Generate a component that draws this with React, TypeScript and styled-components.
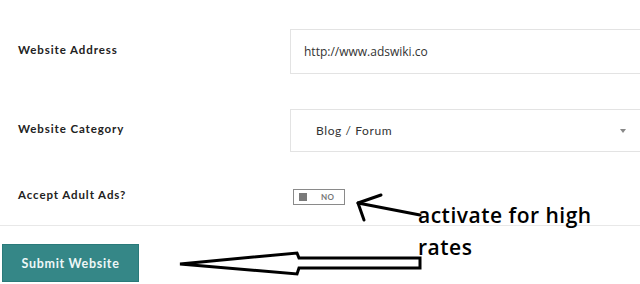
import React from 'react'
import styled, { createGlobalStyle } from 'styled-components'

const GlobalStyle = createGlobalStyle`
  html, body {
    margin: 0;
    padding: 0;
    background: #ffffff;
  }
`

const Page = styled.div`
  position: relative;
  width: 640px;
  height: 284px;
  overflow: hidden;
  background: #ffffff;
  font-family: Lato, 'Open Sans', sans-serif;
`

const Row = styled.div<{ $top: number; $height: number }>`
  display: flex;
  align-items: center;
  margin-top: ${({ $top }) => $top}px;
  height: ${({ $height }) => $height}px;
`

const Label = styled.div`
  width: 272px;
  padding: 0 0 5px 18px;
  font-family: Lato, sans-serif;
  font-weight: 700;
  font-size: 11.5px;
  letter-spacing: 0.9px;
  color: #222222;
`

const Field = styled.div`
  flex: 1;
  height: 100%;
  box-sizing: border-box;
  border: 1px solid #e3e3e3;
  border-right: none;
  display: flex;
  align-items: center;
`

const InputText = styled.span`
  padding-left: 13px;
  font-family: 'Open Sans', sans-serif;
  font-size: 12px;
  color: #333333;
`

const SelectText = styled.span`
  flex: 1;
  padding-left: 25px;
  font-family: Lato, sans-serif;
  font-size: 12px;
  letter-spacing: 0.6px;
  color: #333333;
`

const Caret = styled.span`
  width: 0;
  height: 0;
  margin-right: 14px;
  border-left: 3px solid transparent;
  border-right: 3px solid transparent;
  border-top: 4px solid #888888;
`

const Toggle = styled.div`
  margin-left: 3px;
  width: 52px;
  height: 16px;
  box-sizing: border-box;
  border: 1.5px solid #8a8a8a;
  display: flex;
  align-items: center;
  padding-left: 5px;
`

const Knob = styled.span`
  width: 8px;
  height: 8px;
  background: #7a7a7a;
`

const ToggleText = styled.span`
  margin-left: 14px;
  font-family: Lato, sans-serif;
  font-weight: 700;
  font-size: 8px;
  letter-spacing: 0.4px;
  color: #777777;
`

const Divider = styled.div`
  margin-top: 20px;
  height: 1px;
  background: #e8e8e8;
`

const SubmitButton = styled.button`
  display: block;
  margin: 18px 0 0 2px;
  width: 137px;
  height: 38px;
  box-sizing: border-box;
  background: #358787;
  border: 1px solid #2a7a7a;
  color: #eef7f7;
  font-family: Lato, sans-serif;
  font-weight: 700;
  font-size: 12.5px;
  letter-spacing: 0.7px;
  cursor: pointer;
`

const Note = styled.div`
  position: absolute;
  left: 418px;
  top: 199px;
  font-family: 'Open Sans', sans-serif;
  font-weight: 600;
  font-size: 21px;
  line-height: 32px;
  letter-spacing: 0.5px;
  color: #000000;
  width: 215px;
`

const Arrows = styled.svg`
  position: absolute;
  left: 0;
  top: 0;
  pointer-events: none;
`

const App = () => (
  <>
    <GlobalStyle />
    <Page>
      <Row $top={29} $height={45}>
        <Label>Website Address</Label>
        <Field>
          <InputText>http://www.adswiki.co</InputText>
        </Field>
      </Row>
      <Row $top={35} $height={43}>
        <Label>Website Category</Label>
        <Field>
          <SelectText>Blog / Forum</SelectText>
          <Caret />
        </Field>
      </Row>
      <Row $top={37} $height={16}>
        <Label>Accept Adult Ads?</Label>
        <Toggle>
          <Knob />
          <ToggleText>NO</ToggleText>
        </Toggle>
      </Row>
      <Divider />
      <SubmitButton>Submit Website</SubmitButton>
      <Note>activate for high rates</Note>
      <Arrows width="640" height="284" viewBox="0 0 640 284">
        <g fill="none" stroke="#000" strokeWidth="3" strokeLinecap="round" strokeLinejoin="round">
          <path d="M420 215 L358 203" />
          <path d="M381 195 L358 203 L364 220" />
        </g>
        <path
          d="M180 264 L297 253 L299 258 L420 258 L420 268 L299 268 L297 274 Z"
          fill="#fff"
          stroke="#000"
          strokeWidth="3"
          strokeLinejoin="miter"
        />
      </Arrows>
    </Page>
  </>
)

export default App
